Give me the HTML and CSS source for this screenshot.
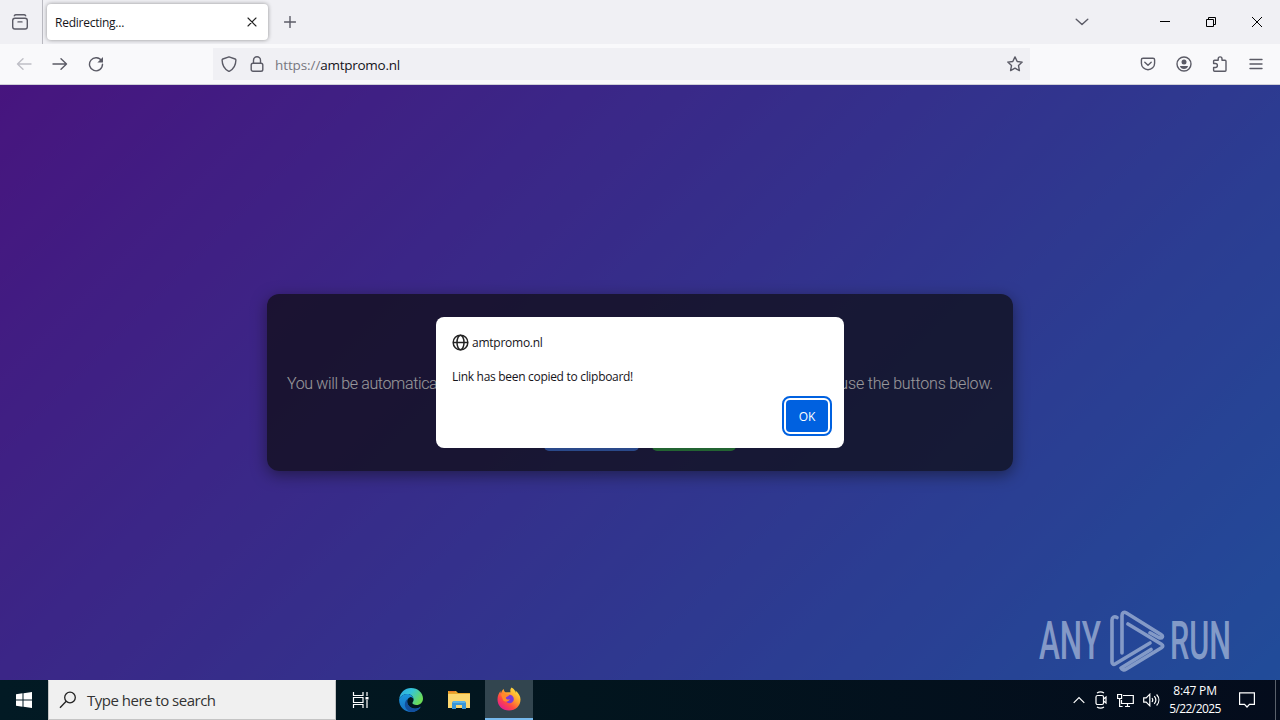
FILE: index.html
```html
<!DOCTYPE html>
<html lang="en">
<head>
    <meta charset="UTF-8">
    <meta name="viewport" content="width=device-width, initial-scale=1.0">
    <title>Redirecting...</title>
    <link rel="stylesheet" href="styles.css">
</head>
<body>
    <!-- Tabs -->
    <div class="tab-bar">
        <div class="recent">
            <svg class="icon" width="18" height="18" viewBox="0 0 18 18"><rect x="1.7" y="5.2" width="14.6" height="10.8" rx="2.2"/><path d="M3.3 2.8C3.8 1.8 4.2 1.7 5 1.7h8c.8 0 1.2.1 1.700 1.100M7 8.900h4"/></svg>
        </div>
        <div class="tab">
            <span class="tab-title">Redirecting...</span>
            <svg class="icon dark" width="10" height="10" viewBox="0 0 10 10"><path d="M1 1l8 8M9 1L1 9"/></svg>
        </div>
        <svg class="icon new-tab" width="12" height="12" viewBox="0 0 12 12"><path d="M6 .5v11M.5 6h11"/></svg>
        <div class="window-buttons">
            <svg class="icon" width="14" height="8" viewBox="0 0 14 8"><path d="M1.200 1.200L7 6.600l5.800-5.400"/></svg>
            <svg class="icon win minimize" width="10" height="10" viewBox="0 0 10 10"><path d="M0 4.500h10"/></svg>
            <svg class="icon win restore" width="10" height="10" viewBox="0 0 10 10"><path d="M.5 2.500h7v7h-7zM2.500 2.500v-2h7v7h-2"/></svg>
            <svg class="icon win close" width="10" height="10" viewBox="0 0 10 10"><path d="M0 0l10 10M10 0L0 10"/></svg>
        </div>
    </div>

    <!-- Navigation -->
    <div class="nav-bar">
        <div class="nav-buttons">
            <svg class="icon disabled" width="16" height="14" viewBox="0 0 16 14"><path d="M15 7H1.500M7 1.700L1.500 7 7 12.300"/></svg>
            <svg class="icon" width="16" height="14" viewBox="0 0 16 14"><path d="M1 7h13.500M9 1.700L14.500 7 9 12.300"/></svg>
            <svg class="icon" width="16" height="16" viewBox="0 0 16 16"><path d="M13.600 5A6.500 6.500 0 1 0 14.500 8.300"/><path class="fill" d="M15 1v5.600H9.400z"/></svg>
        </div>
        <div class="url-bar">
            <svg class="icon" width="16" height="16" viewBox="0 0 16 16"><path d="M8 .8L14.200 3c.5.200.7.500.7 1-.1 5.500-2.400 9-6.300 11.100-.4.200-.8.200-1.200 0C3.500 13 1.200 9.500 1.100 4c0-.5.200-.8.700-1z"/></svg>
            <svg class="icon lock" width="14" height="16" viewBox="0 0 14 16"><rect x="1.200" y="7.200" width="11.600" height="8" rx="1.800"/><path d="M3.500 7V4.200a3.500 3.500 0 0 1 7 0V7"/></svg>
            <span class="url"><span class="scheme">https://</span>amtpromo.nl</span>
            <svg class="icon" width="16" height="16" viewBox="0 0 16 16"><path d="M8 .9l2.200 4.600 5 .6-3.700 3.500.9 5L8 12.200l-4.400 2.400.9-5L.8 6.100l5-.6z"/></svg>
        </div>
        <div class="nav-tools">
            <svg class="icon" width="16" height="16" viewBox="0 0 16 16"><path d="M3 2.200h10c1 0 1.600.6 1.600 1.600v3.400a6.600 6.600 0 0 1-13.200 0V3.800c0-1 .6-1.600 1.600-1.600zM4.800 6.300L8 9.300l3.200-3"/></svg>
            <svg class="icon" width="16" height="16" viewBox="0 0 16 16"><circle cx="8" cy="8" r="7"/><circle class="fill" cx="8" cy="6" r="2.500"/><path class="fill" d="M3.900 10h8.200c-.5 2-2 3-4.100 3s-3.600-1-4.100-3z"/></svg>
            <svg class="icon" width="16" height="16" viewBox="0 0 16 16"><path d="M2.500 15.200c-.6 0-.9-.3-.9-.9v-2.800h1.800a2 2 0 0 0 0-4H1.600V5.200c0-.6.300-.9.900-.9h3.700V2.800a1.900 1.900 0 0 1 3.800 0v1.500h3.100c.6 0 .9.300.9.900v9.100c0 .6-.3.900-.9.900z"/></svg>
            <svg class="icon" width="16" height="16" viewBox="0 0 16 16"><path d="M2 3.500h12M2 8h12M2 12.500h12"/></svg>
        </div>
    </div>

    <!-- Page -->
    <div class="page">
        <div class="card">
            <p class="message"><span class="lead">You will be automatically</span><span>use the buttons below.</span></p>
            <div class="card-buttons">
                <div class="btn btn-blue"></div>
                <div class="btn btn-green"></div>
            </div>
        </div>

        <div class="overlay">
            <div class="dialog">
                <div class="dialog-origin">
                    <svg width="17" height="17" viewBox="0 0 16 16"><circle cx="8" cy="8" r="6.900"/><ellipse cx="8" cy="8" rx="3.300" ry="6.900"/><path d="M1 8h14"/></svg>
                    <span>amtpromo.nl</span>
                </div>
                <p class="dialog-text">Link has been copied to clipboard!</p>
                <button class="ok-btn">OK</button>
            </div>
        </div>

        <svg class="watermark" width="204" height="64" viewBox="0 0 204 64">
            <text x="1" y="51" textLength="62" lengthAdjust="spacingAndGlyphs">ANY</text>
            <text x="132" y="51" textLength="61" lengthAdjust="spacingAndGlyphs">RUN</text>
            <path d="M79 9.500c-2.500-1.500-5-.5-5 2.500v42c0 2.300 1.500 3 3.500 1.800L112 35"/>
            <path d="M84 45V7.500c0-3 2-4 4.500-2.500L123 26.500c2.500 1.500 1.500 4.300-2 3.300l-9-5"/>
            <path d="M90 16l33.500 20.300c1.700 1 1.700 2.500 0 3.500L88 61.300c-2 1.200-4 .5-5-1.300l30-18.500"/>
        </svg>
    </div>

    <!-- Taskbar -->
    <div class="taskbar">
        <div class="start">
            <svg width="16" height="16" viewBox="0 0 16 16"><path d="M0 2.200l6.500-.9v6.200H0zM7.500 1.200L16 0v7.500H7.500zM0 8.500h6.500v6.200L0 13.800zM7.500 8.500H16V16l-8.500-1.200z" fill="#fff"/></svg>
        </div>
        <div class="search">
            <svg width="18" height="18" viewBox="0 0 18 18"><circle cx="11" cy="6.500" r="5.300"/><path d="M7.200 10.300L1 16.800"/></svg>
            <span>Type here to search</span>
        </div>
        <div class="task">
            <svg width="18" height="16" viewBox="0 0 18 16" fill="none" stroke="#fff" stroke-width="1.200"><path d="M1.500 0v3.500h9.500V0M1.500 16v-3.500h9.500V16M1.500 5.500h9.500v5H1.500zM15 0v4M15 8v8"/><path d="M13.500 5h3v2.500h-3z" fill="#fff" stroke="none"/></svg>
        </div>
        <div class="task edge">
            <svg width="24" height="24" viewBox="0 0 24 24">
                <defs>
                    <linearGradient id="edge-top" x1="0" y1="0" x2="1" y2=".5"><stop offset="0" stop-color="#2ba9e8"/><stop offset=".5" stop-color="#35c5d8"/><stop offset="1" stop-color="#6bdc57"/></linearGradient>
                    <linearGradient id="edge-side" x1="0" y1="0" x2="0" y2="1"><stop offset="0" stop-color="#1b96dd"/><stop offset="1" stop-color="#1672c4"/></linearGradient>
                </defs>
                <path d="M.2 11C1 4.500 6 0 12 0c7 0 12 5 12 10.500 0 4-2.900 6.500-6.500 6.500-2.500 0-4.100-1-4.100-1.900 0-.8 1.200-1.200 1.200-3.500C14.600 8.500 12 6 8.500 6 4.500 6 1.500 8 .2 11z" fill="url(#edge-top)"/>
                <path d="M.2 11C1.500 8 4.500 6 8.300 6c3.500 0 6.300 2.500 6.300 5.500-.5-1.600-1.600-2.500-3-2.500-3 1-4 3.500-3.200 6.500 1 3.500 5.200 6 9.200 5 1.600-.4 3-1 4.200-2C20 22 16.500 24 12 24 5 24-.5 18 .2 11z" fill="url(#edge-side)"/>
                <path d="M8.500 11C7 16 11 21 17.200 20.600c2-.1 4-1.300 4.800-2.200-2 3.600-5.800 5.600-10 5.600-4-1-7-5-6-9 .4-1.800 1.300-3.200 2.500-4z" fill="#124f9e"/>
            </svg>
        </div>
        <div class="task">
            <svg width="22" height="20" viewBox="0 0 22 20"><path d="M0 1h8l2 2h12v15H0z" fill="#e9a82e"/><path d="M0 4h22v14H0z" fill="#fcd770"/><path d="M1 1h6v1.200H1z" fill="#f07d2a"/><path d="M5 11h12l1 2v6h-4v-4H8v4H4v-6z" fill="#3a96d8"/><path d="M5 11h12v2H5z" fill="#5bb3e8"/></svg>
        </div>
        <div class="task active">
            <svg width="24" height="24" viewBox="0 0 24 24">
                <defs>
                    <linearGradient id="fox" x1=".85" y1=".1" x2=".2" y2=".9"><stop offset="0" stop-color="#ffe13e"/><stop offset=".4" stop-color="#ff9a2c"/><stop offset=".7" stop-color="#ff4a42"/><stop offset="1" stop-color="#e8208a"/></linearGradient>
                </defs>
                <path d="M14.500.5c3 1.500 4 4 4.200 5.500 0-1 .1-1.500-.2-2.500C21.500 6 23.500 9 23.500 12.500 23.500 19 18.500 23.500 12 23.500S.5 19 .5 12.500C.5 9 1.500 6.500 3.500 4c0 1 .1 1.500.5 2.200C4.500 4.500 5.500 3 6.800 2c0 1.600.6 2.500 1.700 3.200h5C13 3.500 13.500 1.500 14.500.5z" fill="url(#fox)"/>
                <circle cx="12.500" cy="12" r="4.300" fill="#7a3bd8"/>
                <path d="M4 7.500c2-1.200 4-1 5 0h3.500c0 1.800-3.500 2-3.700 3.500.7 1.500 2 2 4.200 1-1.500 3.200-5 3.200-6.800 1.500z" fill="#ff8a2a"/>
            </svg>
        </div>
        <div class="tray">
            <svg width="12" height="8" viewBox="0 0 12 8"><path d="M.7 6.800L6 1.500l5.300 5.300"/></svg>
            <svg width="14" height="18" viewBox="0 0 14 18"><rect x="2" y="4.500" width="7.500" height="9" rx="1.500"/><path d="M9.500 8l2.500-2v6l-2.500-2M3 2c2-1.300 5-1.300 7 0M3 16c2 1.300 5 1.300 7 0"/></svg>
            <svg width="17" height="15" viewBox="0 0 17 15"><path d="M6 2.500h10.300v8H4.500V7M8 13.500h5M10.500 10.500v3M.6 1.500h4v4h-4zM2.600 5.500v8h3"/></svg>
            <svg width="17" height="14" viewBox="0 0 17 14"><path d="M.7 4.800h2.500L6.800 1.200v11.600L3.200 9.200H.7zM9 5c.9 1.200.9 2.800 0 4M11.300 3.200c1.900 2.300 1.900 5.300 0 7.600M13.600 1.500c3 3.300 3 7.700 0 11"/></svg>
        </div>
        <div class="clock">
            <span>8:47 PM</span>
            <span class="date">5/22/2025</span>
        </div>
        <svg class="notice" width="16" height="16" viewBox="0 0 16 16"><path d="M.6.800h14.800v11.500H10.500L8 15l-2.500-2.700H.6z"/></svg>
        <div class="show-desktop"></div>
    </div>
</body>
</html>
```

FILE: styles.css
```css
* {
    box-sizing: border-box;
}
body {
    margin: 0;
    width: 1280px;
    height: 720px;
    display: flex;
    flex-direction: column;
    overflow: hidden;
    font-family: "Open Sans", "Noto Sans", sans-serif;
    font-size: 12px;
    color: #15141a;
}
svg {
    display: block;
    flex: none;
}
p {
    margin: 0;
}
.icon {
    fill: none;
    stroke: #5b5b66;
    stroke-width: 1.4;
    stroke-linecap: round;
    stroke-linejoin: round;
}
.icon .fill {
    fill: #5b5b66;
    stroke: none;
}
.icon.dark {
    stroke: #222;
    stroke-width: 1.1;
}
.icon.disabled {
    stroke: #bfbfc6;
}
.icon.win {
    stroke: #000;
    stroke-width: 1;
    stroke-linecap: butt;
    stroke-linejoin: miter;
}

/* Tabs */
.tab-bar {
    height: 44px;
    display: flex;
    align-items: center;
    background: #f0f0f4;
}
.recent {
    width: 43px;
    height: 44px;
    padding: 13px 0 0 11px;
    border-right: 1px solid #b9b9c0;
}
.tab {
    width: 221px;
    height: 36px;
    margin-left: 4px;
    padding: 0 11px 0 8px;
    display: flex;
    align-items: center;
    justify-content: space-between;
    background: #fff;
    border-radius: 4px;
    box-shadow: 0 0 4px rgba(0, 0, 0, 0.4);
}
.tab-title {
    margin-top: 1px;
    letter-spacing: -0.25px;
}
.new-tab {
    margin-left: 16px;
}
.window-buttons {
    margin-left: auto;
    padding-right: 18px;
    display: flex;
    align-items: center;
}
.minimize {
    margin-left: 71px;
}
.restore,
.close {
    margin-left: 36px;
}

/* Navigation */
.nav-bar {
    height: 41px;
    display: flex;
    align-items: center;
    background: #f9f9fb;
    border-bottom: 1px solid #d0d0d8;
}
.nav-buttons {
    width: 213px;
    padding-left: 16px;
    display: flex;
    align-items: center;
    gap: 20px;
}
.url-bar {
    width: 817px;
    height: 32px;
    padding: 0 7px 0 8px;
    display: flex;
    align-items: center;
    background: #f0f0f4;
}
.lock {
    margin-left: 13px;
}
.url {
    flex: 1;
    margin: 1px 0 0 11px;
    font-size: 13.5px;
    letter-spacing: -0.27px;
}
.scheme {
    color: #77777f;
    letter-spacing: -0.1px;
}
.nav-tools {
    margin-left: auto;
    padding-right: 16px;
    display: flex;
    gap: 20px;
}

/* Page */
.page {
    position: relative;
    height: 595px;
    display: flex;
    align-items: center;
    justify-content: center;
    background: linear-gradient(135deg, #6a11cb, #2575fc);
}
.card {
    width: 746px;
    height: 177px;
    padding: 20px;
    display: flex;
    flex-direction: column;
    justify-content: flex-end;
    background: rgba(0, 0, 0, 0.7);
    border-radius: 12px;
    box-shadow: 0 4px 15px rgba(0, 0, 0, 0.5);
}
.message {
    display: flex;
    justify-content: space-between;
    margin-bottom: 20px;
    font-family: Roboto, "Liberation Sans", sans-serif;
    font-size: 16px;
    font-weight: 300;
    line-height: 18px;
    letter-spacing: -0.17px;
    color: #fff;
}
.lead {
    letter-spacing: -0.36px;
}
.card-buttons {
    display: flex;
    justify-content: center;
    gap: 13px;
}
.btn {
    height: 38px;
    border-radius: 5px;
}
.btn-blue {
    width: 95px;
    background: #3670e0;
}
.btn-green {
    width: 84px;
    background: #28a040;
}
.overlay {
    position: absolute;
    inset: 0;
    display: flex;
    align-items: center;
    justify-content: center;
    background: rgba(28, 27, 34, 0.45);
}
.dialog {
    width: 408px;
    height: 131px;
    padding: 16px;
    display: flex;
    flex-direction: column;
    background: #fff;
    border-radius: 8px;
}
.dialog-origin {
    display: flex;
    align-items: center;
    gap: 3px;
    height: 18px;
    letter-spacing: -0.25px;
}
.dialog-origin svg {
    fill: none;
    stroke: #222;
    stroke-width: 1.4;
}
.dialog-text {
    margin-top: 17px;
    line-height: 18px;
    letter-spacing: -0.3px;
}
.ok-btn {
    align-self: flex-end;
    width: 42px;
    height: 32px;
    margin-top: 14px;
    padding: 0;
    font: inherit;
    color: #fff;
    background: #0061e0;
    border: none;
    border-radius: 4px;
    outline: 2px solid #0061e0;
    outline-offset: 2px;
}
.watermark {
    position: absolute;
    right: 38px;
    bottom: 8px;
    fill: none;
    stroke: #b7c7e2;
    stroke-width: 3.6;
    stroke-linecap: round;
    stroke-linejoin: round;
    opacity: 0.65;
}
.watermark text {
    font-family: Roboto, sans-serif;
    font-size: 53px;
    font-weight: 500;
    fill: #b7c7e2;
    stroke: none;
}

/* Taskbar */
.taskbar {
    height: 40px;
    display: flex;
    align-items: center;
    background: linear-gradient(to right, #021a24, #02151e 45%, #040c1c);
    color: #fff;
}
.start,
.task {
    width: 48px;
    height: 40px;
    display: flex;
    align-items: center;
    justify-content: center;
}
.search {
    width: 288px;
    height: 40px;
    padding-left: 10px;
    display: flex;
    align-items: center;
    gap: 10px;
    background: #f0f0f0;
    border: 1px solid #c4c4c4;
    border-top-color: #f0f0f0;
    color: #333;
    font-size: 15px;
    letter-spacing: -0.5px;
}
.search svg {
    fill: none;
    stroke: #222;
    stroke-width: 1.3;
}
.task {
    width: 49px;
}
.edge {
    padding-left: 2px;
}
.task.active {
    width: 48px;
    margin-left: 2px;
    background: #32454f;
    border-bottom: 2px solid #76b9ed;
}
.tray {
    margin-left: auto;
    display: flex;
    align-items: center;
    gap: 9px;
}
.tray svg,
.notice {
    fill: none;
    stroke: #fff;
    stroke-width: 1.2;
}
.clock {
    width: 70px;
    display: flex;
    flex-direction: column;
    align-items: center;
    line-height: 18px;
    letter-spacing: -0.2px;
}
.date {
    letter-spacing: -0.6px;
}
.notice {
    margin-left: 9px;
}
.show-desktop {
    width: 5px;
    height: 40px;
    margin-left: 20px;
    border-left: 1px solid #5a616b;
}
```
